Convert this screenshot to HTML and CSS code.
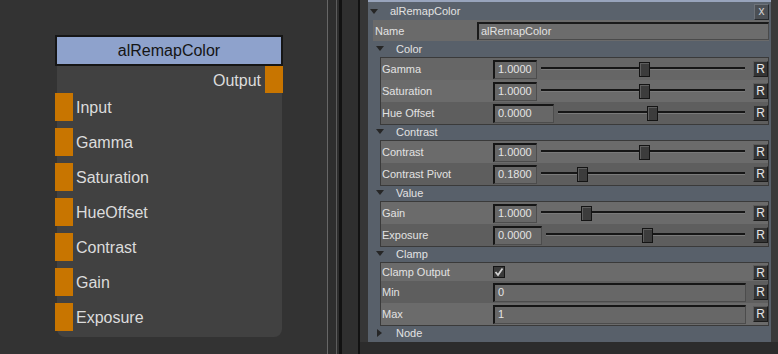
FILE: index.html
```html
<!DOCTYPE html>
<html>
<head>
<meta charset="utf-8">
<link rel="stylesheet" href="styles.css">
</head>
<body>
<div class="app">
  <div class="graph">
    <div class="node">
      <div class="node-title">alRemapColor</div>
      <div class="node-body">
        <div class="out-row"><span>Output</span><i class="port"></i></div>
        <div class="in-row"><i class="port"></i><span>Input</span></div>
        <div class="in-row"><i class="port"></i><span>Gamma</span></div>
        <div class="in-row"><i class="port"></i><span>Saturation</span></div>
        <div class="in-row"><i class="port"></i><span>HueOffset</span></div>
        <div class="in-row"><i class="port"></i><span>Contrast</span></div>
        <div class="in-row"><i class="port"></i><span>Gain</span></div>
        <div class="in-row"><i class="port"></i><span>Exposure</span></div>
      </div>
    </div>
  </div>
  <div class="divider">
    <i class="d1"></i><i class="d2"></i><i class="d3"></i><i class="d4"></i><i class="d5"></i><i class="d6"></i><i class="d7"></i>
  </div>
  <div class="editor">
    <div class="frame">
      <div class="panel">
        <div class="p-head">
          <svg class="tri" width="8" height="6" viewBox="0 0 8 6"><polygon points="0,0 8,0 4,5" /></svg>
          <span class="p-title">alRemapColor</span>
          <span class="xbtn">x</span>
        </div>
        <div class="name-row">
          <span class="name-label">Name</span>
          <span class="name-field">alRemapColor</span>
        </div>

        <div class="sec"><svg class="tri" width="8" height="6" viewBox="0 0 8 6"><polygon points="0,0 8,0 4,5" /></svg><span>Color</span></div>
        <div class="group">
          <div class="row mid"><span class="lbl">Gamma</span><span class="fld">1.0000</span><span class="slider"><i class="thumb" style="left:98px"></i></span><span class="rbtn">R</span></div>
          <div class="row light"><span class="lbl">Saturation</span><span class="fld">1.0000</span><span class="slider"><i class="thumb" style="left:98px"></i></span><span class="rbtn">R</span></div>
          <div class="row dark"><span class="lbl">Hue Offset</span><span class="fld wide">0.0000</span><span class="slider"><i class="thumb" style="left:89px"></i></span><span class="rbtn">R</span></div>
        </div>

        <div class="sec"><svg class="tri" width="8" height="6" viewBox="0 0 8 6"><polygon points="0,0 8,0 4,5" /></svg><span>Contrast</span></div>
        <div class="group">
          <div class="row light"><span class="lbl">Contrast</span><span class="fld">1.0000</span><span class="slider"><i class="thumb" style="left:98px"></i></span><span class="rbtn">R</span></div>
          <div class="row dark"><span class="lbl">Contrast Pivot</span><span class="fld">0.1800</span><span class="slider"><i class="thumb" style="left:36px"></i></span><span class="rbtn">R</span></div>
        </div>

        <div class="sec"><svg class="tri" width="8" height="6" viewBox="0 0 8 6"><polygon points="0,0 8,0 4,5" /></svg><span>Value</span></div>
        <div class="group">
          <div class="row light"><span class="lbl">Gain</span><span class="fld">1.0000</span><span class="slider"><i class="thumb" style="left:40px"></i></span><span class="rbtn">R</span></div>
          <div class="row dark"><span class="lbl">Exposure</span><span class="fld mwide">0.0000</span><span class="slider"><i class="thumb" style="left:96px"></i></span><span class="rbtn">R</span></div>
        </div>

        <div class="sec"><svg class="tri" width="8" height="6" viewBox="0 0 8 6"><polygon points="0,0 8,0 4,5" /></svg><span>Clamp</span></div>
        <div class="group">
          <div class="row light short"><span class="lbl">Clamp Output</span><span class="chk"><svg width="10" height="10" viewBox="0 0 10 10"><polyline points="1.5,5 4,8 8.5,1.5" fill="none" stroke="#d0d0d0" stroke-width="1.8"/></svg></span><span class="spacer"></span><span class="rbtn">R</span></div>
          <div class="row dark"><span class="lbl">Min</span><span class="fld full">0</span><span class="rbtn">R</span></div>
          <div class="row light"><span class="lbl">Max</span><span class="fld full">1</span><span class="rbtn">R</span></div>
        </div>

        <div class="sec"><svg class="tri right" width="8" height="8" viewBox="0 0 8 8"><polygon points="1,0 6,4 1,8" /></svg><span>Node</span></div>
      </div>
      <div class="strip"></div>
    </div>
  </div>
</div>
</body>
</html>
```

FILE: styles.css
```css
* { box-sizing: border-box; }
html, body { margin: 0; padding: 0; }
body { width: 778px; height: 354px; overflow: hidden; background: #2c2c2c; font-family: "Liberation Sans", Arial, sans-serif; }
.app { display: flex; height: 354px; }

/* node graph */
.graph { width: 327px; flex: none; background: #333333; padding: 35px 0 0 55px; }
.node { width: 228px; }
.node-title { height: 31px; background: #8ea2cc; border: 2px solid #161616; color: #151515; font-size: 16px; line-height: 27px; text-align: center; }
.node-body { margin: 0 1px 0 2px; height: 271px; background: #414141; border-radius: 0 0 8px 8px; padding-bottom: 6px; display: flex; flex-direction: column; gap: 7px; }
.port { display: block; width: 18px; height: 28px; background: #c87500; flex: none; }
.out-row { height: 27px; display: flex; justify-content: flex-end; align-items: center; margin-right: -1px; margin-bottom: -7px; color: #dcdcdc; font-size: 16px; }
.out-row .port { height: 27px; }
.out-row span { margin-right: 4px; margin-top: 2px; }
.in-row { height: 28px; display: flex; align-items: center; margin-left: -2px; color: #dcdcdc; font-size: 16px; }
.in-row span { margin-left: 3px; margin-top: 2px; }

/* divider */
.divider { width: 33px; flex: none; display: flex; background: #2e2e2e; }
.divider i { display: block; height: 100%; }
.d1 { width: 1px; background: #676767; }
.d2 { width: 8px; background: #2e2e2e; }
.d3 { width: 1px; background: #5c5c5c; }
.d4 { width: 2px; background: #2e2e2e; }
.d5 { width: 3px; background: #121212; }
.d6 { width: 16px; background: #2f2f2f; }
.d7 { width: 2px; background: #121212; }

/* editor */
.editor { flex: 1; background: #2c2c2c; }
.frame { height: 342px; display: flex; background: #363636; padding-left: 8px; }
.panel { width: 403px; background: #58606a; font-size: 11px; color: #e2e2e2; }
.strip { flex: 1; background: #3a3a3a; }

.tri { fill: #262626; flex: none; }
.p-head { height: 20px; border-top: 2px solid #98a4bc; background: #5a626c; display: flex; align-items: center; padding-left: 2px; }
.p-head .tri { margin-top: 1px; }
.p-title { margin-left: 12px; }
.xbtn { margin-left: auto; margin-right: 2px; width: 15px; height: 16px; background: #4b4f54; border: 1px solid; border-color: #6d7279 #26292c #26292c #6d7279; color: #d0d0d0; font-size: 12px; line-height: 12px; text-align: center; margin-top: 1px; }

.name-row { height: 21px; margin: 0 2px 0 5px; background: #6a6a6a; display: flex; align-items: center; }
.name-label { width: 104px; padding-left: 2px; }
.name-field { flex: 1; height: 18px; background: #6c6c6c; border: 1px solid #4a4a4a; border-top: 2px solid #1a1a1a; border-left: 2px solid #1a1a1a; padding-left: 2px; line-height: 14px; }

.sec { height: 16px; display: flex; align-items: center; padding-left: 8px; }
.sec span { margin-left: 12px; }
.sec .right { margin-left: 0; }

.group { margin: 0 2px 0 12px; border: 1px solid #3a3a3a; border-bottom: none; box-shadow: 0 1px 0 #3a3a3a; }
.row { height: 22px; display: flex; align-items: center; }
.row.short { height: 18px; }
.row.light { background: #6b6b6b; }
.row.mid { background: #666666; }
.row.dark { background: #5e5e5e; }
.lbl { width: 112px; flex: none; padding-left: 1px; white-space: nowrap; }
.fld { width: 44px; flex: none; height: 19px; background: #676767; border: 1px solid #4c4c4c; border-top: 2px solid #161616; border-left: 2px solid #161616; padding-left: 3px; line-height: 15px; color: #e4e4e4; }
.fld.wide { width: 61px; }
.fld.mwide { width: 49px; }
.fld.full { flex: 1; width: auto; margin-right: 7px; }
.slider { flex: 1; position: relative; height: 22px; margin: 0 8px 0 4px; }
.slider::before { content: ""; position: absolute; left: 0; right: 0; top: 9px; height: 2px; background: #161616; box-shadow: 0 1px 0 #7a7a7a; }
.thumb { position: absolute; top: 4px; width: 11px; height: 15px; background: #3c3c3c; border: 1px solid #141414; box-shadow: inset 1px 1px 0 #5e5e5e; }
.rbtn { width: 15px; flex: none; height: 16px; background: #343434; border: 1px solid; border-color: #5c5c5c #1c1c1c #1c1c1c #5c5c5c; color: #e6e6e6; font-size: 12px; line-height: 14px; text-align: center; }
.row.short .rbtn { height: 15px; }
.chk { width: 12px; height: 12px; flex: none; background: #3a3a3a; border: 1px solid #141414; display: flex; align-items: center; justify-content: center; }
.spacer { flex: 1; }
```
